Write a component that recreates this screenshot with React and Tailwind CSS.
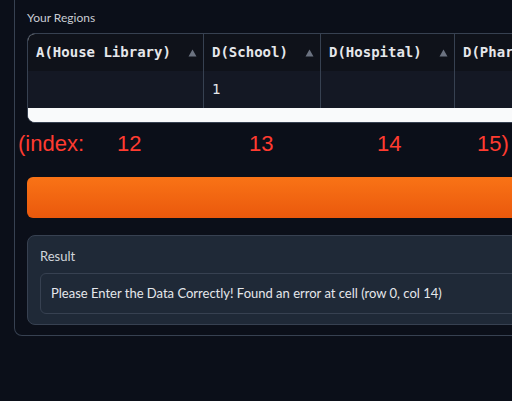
import React from 'react';

const columns = [
  { name: 'A(House Library)', width: 'w-[175px]', value: '' },
  { name: 'D(School)', width: 'w-[117px]', value: '1' },
  { name: 'D(Hospital)', width: 'w-[134px]', value: '' },
  { name: 'D(Pharmacy)', width: 'w-[160px]', value: '' },
];

const SortArrow = () => (
  <svg width="9" height="8" viewBox="0 0 9 8" className="shrink-0">
    <path d="M4.5 0.5 L8.5 7.5 L0.5 7.5 Z" fill="#6b7280" />
  </svg>
);

const App = () => {
  return (
    <div className="w-[512px] h-[401px] overflow-hidden bg-[#0b0f19]" style={{ fontFamily: 'Lato, "Noto Sans", sans-serif' }}>
      <div className="ml-[14px] w-[540px] border border-t-0 border-[#374151] rounded-b-lg px-3 pb-[10px]">
        {/* Label */}
        <div className="pt-[10px] text-[12px] leading-[16px] text-[#c9cdd4]">Your Regions</div>

        {/* Table */}
        <div className="mt-[7px] border border-[#374151] rounded-lg overflow-hidden bg-[#f9fafb]">
          <div className="flex bg-[#0f121a]">
            {columns.map((c, i) => (
              <div
                key={c.name}
                className={`${c.width} h-[37px] shrink-0 flex items-center justify-between pl-[8px] pr-[6px] ${i > 0 ? 'border-l border-[#374151]' : ''}`}
              >
                <span className="text-[14px] font-bold text-[#e5e7eb] whitespace-nowrap" style={{ fontFamily: '"DejaVu Sans Mono", "Liberation Mono", monospace' }}>
                  {c.name}
                </span>
                {i < 3 && <SortArrow />}
              </div>
            ))}
          </div>
          <div className="flex bg-[#141824]">
            {columns.map((c, i) => (
              <div
                key={c.name + '-v'}
                className={`${c.width} h-[37px] shrink-0 flex items-center pl-[8px] ${i > 0 ? 'border-l border-[#374151]' : ''}`}
              >
                <span className="text-[14px] text-[#e5e7eb]" style={{ fontFamily: '"DejaVu Sans Mono", "Liberation Mono", monospace' }}>
                  {c.value}
                </span>
              </div>
            ))}
          </div>
          <div className="h-[14px] bg-[#f9fafb]" />
        </div>

        {/* Index hint */}
        <div className="-ml-[9px] mt-[7px] flex text-[22px] leading-[28px] text-[#ff3b30] whitespace-nowrap" style={{ fontFamily: '"Liberation Sans", Arial, sans-serif' }}>
          <span className="w-[99px] shrink-0">(index:</span>
          <span className="w-[132px] shrink-0">12</span>
          <span className="w-[128px] shrink-0">13</span>
          <span className="w-[100px] shrink-0">14</span>
          <span className="shrink-0">15)</span>
        </div>

        {/* Submit button */}
        <button className="mt-[19px] block w-full h-[41px] rounded-md bg-gradient-to-b from-[#f97316] to-[#ea580c]" />

        {/* Result */}
        <div className="mt-[17px] border border-[#374151] rounded-lg bg-[#1f2937] px-3 pb-[10px]">
          <div className="pt-[11px] text-[13px] leading-[18px] text-[#d1d5db]">Result</div>
          <div className="mt-[8px] h-[41px] border border-[#374151] rounded-md bg-[#1f2937] pl-[10px] flex items-center">
            <span className="text-[13px] text-[#e5e7eb] whitespace-nowrap">
              Please Enter the Data Correctly! Found an error at cell (row 0, col 14)
            </span>
          </div>
        </div>
      </div>
    </div>
  );
};

export default App;
